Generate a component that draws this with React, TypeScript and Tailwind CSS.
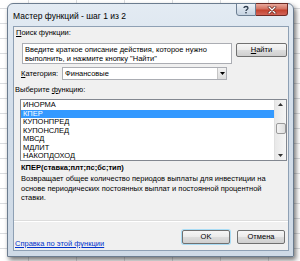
import React from "react";

const F = { fontFamily: '"Liberation Sans", Arial, sans-serif' };

function Btn({ children, className = "" }: { children: React.ReactNode; className?: string }) {
  return (
    <div
      className={
        "flex items-center justify-center rounded-[2px] border border-[#707070] bg-[linear-gradient(#f6f6f6_0%,#ebebeb_48%,#dddddd_52%,#cfcfcf_100%)] text-[7.5px] leading-none text-black " +
        className
      }
    >
      {children}
    </div>
  );
}

const items = ["ИНОРМА", "КПЕР", "КУПОНПРЕД", "КУПОНСЛЕД", "МВСД", "МДЛИТ", "НАКОПДОХОД"];

export default function App() {
  return (
    <div
      style={F}
      className="w-[300px] h-[261px] overflow-hidden relative bg-white bg-[image:linear-gradient(#dadcdf_1px,transparent_1px),linear-gradient(90deg,#dadcdf_1px,transparent_1px)] bg-[size:48px_15px] bg-[position:-20px_-7px]"
    >
      {/* window */}
      <div className="absolute left-[7px] top-[3px] w-[287px] h-[254px] rounded-t-[6px] border border-[#6b7c8f] bg-[linear-gradient(#e3ebf3,#d3deea_40%,#cfdae6)] shadow-[2px_3px_5px_rgba(0,0,0,0.55)] flex flex-col pl-[5px] pr-[4px] pb-[5px]">
        {/* title bar */}
        <div className="h-[22px] flex items-start relative">
          <div className="mt-[7px] text-[8.5px] leading-[10px] text-black">Мастер функций - шаг 1 из 2</div>
          <div className="flex-1" />
          <div className="flex -mt-[1px] mr-[1px]">
            <div className="w-[20px] h-[13px] rounded-bl-[3px] border border-[#6d7f93] bg-[linear-gradient(#eef3f8,#d7e1ec_50%,#c6d3e1)] flex items-center justify-center">
              <svg width="8" height="9" viewBox="0 0 8 9">
                <path d="M2 3 C2 1,6 1,6 3 C6 4.5,4 4.5,4 6" fill="none" stroke="#2b3a4c" strokeWidth="1.3" />
                <rect x="3.3" y="7" width="1.4" height="1.4" fill="#2b3a4c" />
              </svg>
            </div>
            <div className="w-[32px] h-[13px] rounded-br-[3px] border border-l-0 border-[#6e2a24] bg-[linear-gradient(#e9a99c,#d27160_45%,#c4432f_55%,#d2655a)] flex items-center justify-center">
              <svg width="10" height="8" viewBox="0 0 10 8">
                <path d="M2 1 L8 7 M8 1 L2 7" stroke="#5a1a14" strokeWidth="2.6" strokeLinecap="round" />
                <path d="M2 1 L8 7 M8 1 L2 7" stroke="#ffffff" strokeWidth="1.4" strokeLinecap="round" />
              </svg>
            </div>
          </div>
        </div>
        {/* client */}
        <div className="flex-1 border border-[#8ea0b4] bg-[#f0f0f0] flex flex-col text-[7.5px] text-black pt-[1px]">
          <div className="pl-[2px] h-[10px] leading-[10px]">
            <span className="underline">П</span>оиск функции:
          </div>
          <div className="flex mt-[5px] pl-[8px] gap-[4px] items-start">
            <div className="w-[210px] h-[21px] border border-[#abadb3] bg-white px-[2px] pt-[1px] leading-[9px]">
              Введите краткое описание действия, которое нужно выполнить, и нажмите кнопку "Найти"
            </div>
            <Btn className="w-[51px] h-[14px]">
              <span className="underline">Н</span>айти
            </Btn>
          </div>
          <div className="flex items-center mt-[3px] pl-[7px] h-[13px]">
            <div className="w-[41px]">
              <span className="underline">К</span>атегория:
            </div>
            <div className="w-[165px] h-[13px] border border-[#abadb3] bg-white flex items-stretch">
              <div className="flex-1 pl-[2px] leading-[11px]">Финансовые</div>
              <div className="w-[9px] border-l border-[#c5c5c5] bg-[linear-gradient(#f2f2f2,#dcdcdc)] flex items-center justify-center">
                <svg width="5" height="3" viewBox="0 0 5 3">
                  <path d="M0 0 H5 L2.5 3 Z" fill="#000" />
                </svg>
              </div>
            </div>
          </div>
          <div className="pl-[1px] mt-[5px] h-[10px] leading-[10px]">
            Выберите <span className="underline">ф</span>ункцию:
          </div>
          <div className="ml-[6px] mt-[4px] w-[267px] h-[62px] border border-[#828790] bg-white flex">
            <div className="flex-1 pt-[1px]">
              {items.map((it, i) => (
                <div
                  key={it}
                  className={
                    "h-[8.5px] leading-[8.5px] pl-[2px] overflow-hidden " +
                    (i === 1 ? "bg-[#3399ff] text-white" : "")
                  }
                >
                  {it}
                </div>
              ))}
            </div>
            <div className="w-[12px] bg-[linear-gradient(90deg,#e8e8e8,#f5f5f5)] border-l border-[#e0e0e0] flex flex-col items-center">
              <div className="h-[9px] flex items-center justify-center">
                <svg width="5" height="3" viewBox="0 0 5 3">
                  <path d="M0 3 H5 L2.5 0 Z" fill="#333" />
                </svg>
              </div>
              <div className="mt-[14px] w-[10px] h-[11px] rounded-[2px] border border-[#9a9a9a] bg-[linear-gradient(90deg,#f3f3f3,#dedede)]" />
              <div className="flex-1" />
              <div className="h-[9px] flex items-center justify-center">
                <svg width="5" height="3" viewBox="0 0 5 3">
                  <path d="M0 0 H5 L2.5 3 Z" fill="#333" />
                </svg>
              </div>
            </div>
          </div>
          <div className="pl-[7px] mt-[2px] h-[10px] leading-[10px] font-bold">КПЕР(ставка;плт;пс;бс;тип)</div>
          <div className="pl-[7px] mt-[1px] leading-[9.5px] w-[258px]">
            Возвращает общее количество периодов выплаты для инвестиции на основе периодических постоянных выплат и постоянной процентной ставки.
          </div>
          <div className="flex-1" />
          <div className="h-px bg-[#dcdcdc] border-b border-white box-content" />
          <div className="flex items-start h-[28px] pt-[8px]">
            <div className="pl-[1px] mt-[10px] text-[#0033cc] underline leading-[8px]">Справка по этой функции</div>
            <div className="flex-1" />
            <Btn className="w-[48px] h-[14px] border-[#3c7fb1] shadow-[0_0_0_1px_#a9dcf5]">OK</Btn>
            <Btn className="w-[48px] h-[14px] ml-[7px] mr-[3px]">Отмена</Btn>
          </div>
        </div>
      </div>
    </div>
  );
}
